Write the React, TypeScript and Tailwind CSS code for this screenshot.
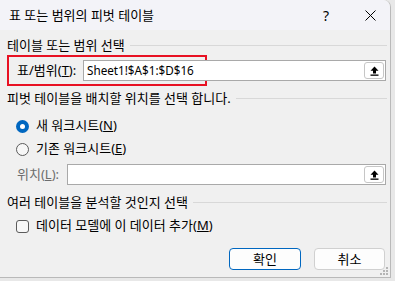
import React from 'react';

const font = "font-['Segoe_UI','Noto_Sans','Noto_Sans_CJK_KR',sans-serif]";

const UploadButton: React.FC = () => (
  <div className="w-[20px] h-[17px] bg-white border border-[#c6c6c6] rounded-[3px] flex items-center justify-center mr-[1px]">
    <svg width="9" height="10" viewBox="0 0 9 10">
      <path d="M4.5 0.5 L8.5 4.8 H6 V7.5 H3 V4.8 H0.5 Z" fill="#000" />
      <rect x="0.5" y="8.5" width="8" height="1.3" fill="#000" />
    </svg>
  </div>
);

const SectionTitle: React.FC<{ text: string }> = ({ text }) => (
  <div className="flex items-center h-[16px]">
    <span className="text-[13px] text-black whitespace-nowrap leading-none">{text}</span>
    <div className="flex-1 h-px bg-[#d8d8d8] ml-[5px]" />
  </div>
);

const App: React.FC = () => {
  return (
    <div className={`w-[395px] h-[281px] bg-[#e8e8e8] overflow-hidden ${font}`}>
      <div className="w-[391px] h-[278px] bg-[#f0f0f0] rounded-tr-[7px] border-r border-b border-[#b9b9b9] flex flex-col relative">
        {/* title bar */}
        <div className="h-[30px] bg-[#f3f3f8] rounded-tr-[7px] flex items-center pl-[9px] pr-[14px] pt-[1px]">
          <span className="text-[13px] text-black leading-none">표 또는 범위의 피벗 테이블</span>
          <div className="flex-1" />
          <span className="text-[14px] text-black mr-[36px]">?</span>
          <svg width="11" height="11" viewBox="0 0 11 11">
            <path d="M0.5 0.5 L10.5 10.5 M10.5 0.5 L0.5 10.5" stroke="#000" strokeWidth="1" />
          </svg>
        </div>

        <div className="pl-[7px] pr-[3px] pt-[7px] flex flex-col">
          <SectionTitle text="테이블 또는 범위 선택" />

          <div className="flex items-center mt-[2px] h-[31px]">
            <div className="w-[200px] h-[31px] border-[2.5px] border-[#e81123] flex items-center pl-[8px] pr-0 shrink-0">
              <span className="text-[13px] text-black w-[66px] whitespace-nowrap">
                표/범위(<span className="underline">T</span>):
              </span>
              <div className="flex-1 h-[21px] bg-white border border-r-0 border-[#a9a9a9] flex items-center pl-[3px]">
                <span className="text-[11.7px] text-black whitespace-nowrap">Sheet1!$A$1:$D$16</span>
              </div>
            </div>
            <div className="flex-1 h-[21px] bg-white border border-l-0 border-[#a9a9a9] flex items-center justify-end -ml-[3px] mr-[1px]">
              <UploadButton />
            </div>
          </div>

          <div className="mt-[4px]">
            <SectionTitle text="피벗 테이블을 배치할 위치를 선택 합니다." />
          </div>

          <div className="flex items-center mt-[11px] pl-[9px] h-[18px]">
            <div className="w-[13px] h-[13px] rounded-full bg-[#0067c0] flex items-center justify-center">
              <div className="w-[5px] h-[5px] rounded-full bg-white" />
            </div>
            <span className="text-[13px] text-black ml-[7px]">
              새 워크시트(<span className="underline">N</span>)
            </span>
          </div>

          <div className="flex items-center mt-[5px] pl-[9px] h-[18px]">
            <div className="w-[13px] h-[13px] rounded-full border border-[#5b5b5b] bg-[#f7f7f7]" />
            <span className="text-[13px] text-black ml-[7px]">
              기존 워크시트(<span className="underline">E</span>)
            </span>
          </div>

          <div className="flex items-center mt-[6px] pl-[10px] h-[21px]">
            <span className="text-[13px] text-[#6d6d6d] w-[50px] whitespace-nowrap">
              위치(<span className="underline">L</span>):
            </span>
            <div className="flex-1 h-[21px] bg-white border border-[#a9a9a9] flex items-center justify-end mr-[1px]">
              <UploadButton />
            </div>
          </div>

          <div className="mt-[9px]">
            <SectionTitle text="여러 테이블을 분석할 것인지 선택" />
          </div>

          <div className="flex items-center mt-[7px] pl-[9px] h-[18px]">
            <div className="w-[13px] h-[13px] rounded-[3px] border border-[#5b5b5b] bg-[#f7f7f7]" />
            <span className="text-[13px] text-black ml-[7px]">
              데이터 모델에 이 데이터 추가(<span className="underline">M</span>)
            </span>
          </div>

          <div className="flex justify-end gap-[13px] mt-[13px] mr-[2px]">
            <button className="w-[72px] h-[22px] bg-[#fdfdfd] border border-[#0067c0] rounded-[4px] text-[13px] text-black leading-none">
              확인
            </button>
            <button className="w-[71px] h-[22px] bg-[#fdfdfd] border border-[#d0d0d0] rounded-[4px] text-[13px] text-black leading-none">
              취소
            </button>
          </div>
        </div>

        {/* resize grip */}
        <svg width="10" height="10" viewBox="0 0 10 10" className="absolute right-[1px] bottom-[1px]">
          <g fill="#b5b5b5">
            <rect x="7" y="1" width="2" height="2" />
            <rect x="4" y="4" width="2" height="2" />
            <rect x="7" y="4" width="2" height="2" />
            <rect x="1" y="7" width="2" height="2" />
            <rect x="4" y="7" width="2" height="2" />
            <rect x="7" y="7" width="2" height="2" />
          </g>
        </svg>
      </div>
    </div>
  );
};

export default App;
